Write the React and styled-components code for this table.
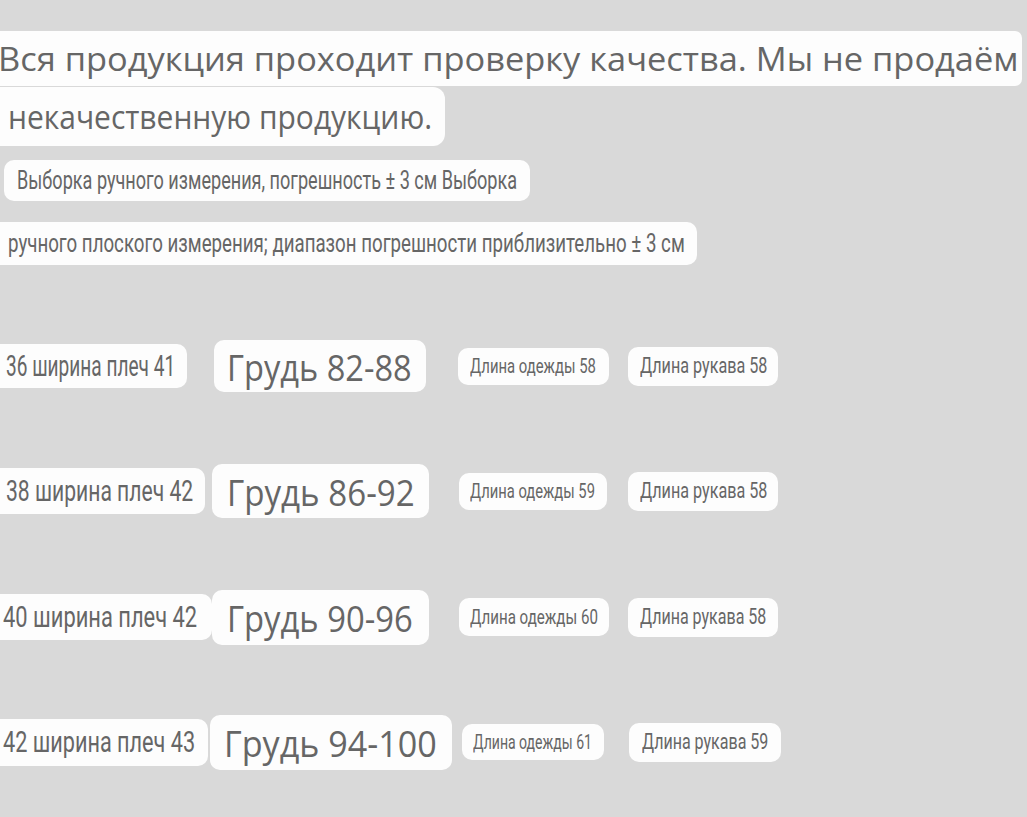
import { useLayoutEffect, useRef, useState } from 'react'
import styled, { createGlobalStyle } from 'styled-components'

const GlobalStyle = createGlobalStyle`
  html, body {
    margin: 0;
    padding: 0;
    background: #d9d9d9;
    overflow: hidden;
  }
`

const heading = "'Open Sans', 'Noto Sans', sans-serif"
const narrow = "Roboto, 'Liberation Sans', sans-serif"

const notes = [
  { text: 'Вся продукция проходит проверку качества. Мы не продаём', w: 1022, h: 55, mt: 0, ml: 0, pl: 0, tw: 1020, fs: 33, font: heading, r: '0 7px 7px 0', shift: -2 },
  { text: 'некачественную продукцию.', w: 445, h: 59, mt: 1, ml: 0, pl: 8, tw: 424, fs: 33, font: heading, r: '0 12px 12px 0' },
  { text: 'Выборка ручного измерения, погрешность ± 3 см Выборка', w: 526, h: 41, mt: 14, ml: 4, pl: 13, tw: 500, fs: 25, font: narrow, r: '10px' },
  { text: 'ручного плоского измерения; диапазон погрешности приблизительно ± 3 см', w: 697, h: 43, mt: 21, ml: 0, pl: 8, tw: 677, fs: 25, font: narrow, r: '0 10px 10px 0' },
]

const rows = [
  {
    mt: 73,
    chips: [
      { text: '36 ширина плеч 41', ml: 0, w: 187, h: 44, pl: 6, tw: 169, kind: 'a' },
      { text: 'Грудь 82-88', ml: 27, w: 212, h: 52, pl: 13, tw: 185, kind: 'b' },
      { text: 'Длина одежды 58', ml: 32, w: 151, h: 37, pl: 12, tw: 126, kind: 'c' },
      { text: 'Длина рукава 58', ml: 19, w: 150, h: 39, pl: 12, tw: 127, kind: 'd' },
    ],
  },
  {
    mt: 69,
    chips: [
      { text: '38 ширина плеч 42', ml: 0, w: 205, h: 46, pl: 6, tw: 187, kind: 'a' },
      { text: 'Грудь 86-92', ml: 7, w: 217, h: 54, pl: 15, tw: 188, kind: 'b' },
      { text: 'Длина одежды 59', ml: 30, w: 148, h: 37, pl: 11, tw: 125, kind: 'c' },
      { text: 'Длина рукава 58', ml: 21, w: 150, h: 39, pl: 12, tw: 127, kind: 'd' },
    ],
  },
  {
    mt: 70,
    chips: [
      { text: '40 ширина плеч 42', ml: 0, w: 212, h: 46, pl: 3, tw: 194, kind: 'a' },
      { text: 'Грудь 90-96', ml: 0, w: 217, h: 55, pl: 15, tw: 186, kind: 'b' },
      { text: 'Длина одежды 60', ml: 30, w: 150, h: 38, pl: 11, tw: 128, kind: 'c' },
      { text: 'Длина рукава 58', ml: 19, w: 150, h: 39, pl: 12, tw: 126, kind: 'd' },
    ],
  },
  {
    mt: 69,
    chips: [
      { text: '42 ширина плеч 43', ml: 0, w: 208, h: 47, pl: 3, tw: 192, kind: 'a' },
      { text: 'Грудь 94-100', ml: 2, w: 242, h: 55, pl: 14, tw: 213, kind: 'b' },
      { text: 'Длина одежды 61', ml: 10, w: 142, h: 36, pl: 11, tw: 119, kind: 'c' },
      { text: 'Длина рукава 59', ml: 25, w: 152, h: 39, pl: 13, tw: 126, kind: 'd' },
    ],
  },
]

const kinds = {
  a: { fs: 29, font: narrow, r: '0 10px 10px 0' },
  b: { fs: 37, font: heading, r: '10px' },
  c: { fs: 21, font: narrow, r: '10px' },
  d: { fs: 22, font: narrow, r: '10px' },
}

export default function App() {
  return (
    <>
      <GlobalStyle />
      <Page>
        {notes.map((n) => (
          <Chip key={n.text} $w={n.w} $h={n.h} $mt={n.mt} $ml={n.ml} $pl={n.pl} $r={n.r}>
            <FitText text={n.text} width={n.tw} fs={n.fs} font={n.font} shift={n.shift} />
          </Chip>
        ))}
        {rows.map((row, i) => (
          <SizeRow key={i} $mt={row.mt}>
            {row.chips.map((c) => {
              const k = kinds[c.kind]
              return (
                <Chip key={c.text + c.kind} $w={c.w} $h={c.h} $ml={c.ml} $pl={c.pl} $r={k.r}>
                  <FitText text={c.text} width={c.tw} fs={k.fs} font={k.font} />
                </Chip>
              )
            })}
          </SizeRow>
        ))}
      </Page>
    </>
  )
}

// squeeze the label so it covers the same width as in the photo
function FitText({ text, width, fs, font, shift = 0 }) {
  const ref = useRef(null)
  const [sx, setSx] = useState(1)
  useLayoutEffect(() => {
    const measure = () => {
      const el = ref.current
      if (el && el.offsetWidth) setSx(width / el.offsetWidth)
    }
    measure()
    if (document.fonts) document.fonts.ready.then(measure)
  }, [text, width])
  return (
    <Label ref={ref} $fs={fs} $font={font} style={{ transform: `translateX(${shift}px) scaleX(${sx})` }}>
      {text}
    </Label>
  )
}

const Page = styled.div`
  padding-top: 31px;
  display: flex;
  flex-direction: column;
  align-items: flex-start;
`

const SizeRow = styled.div`
  display: flex;
  align-items: center;
  height: 56px;
  margin-top: ${(p) => p.$mt}px;
`

const Chip = styled.div`
  box-sizing: border-box;
  display: flex;
  align-items: center;
  flex-shrink: 0;
  width: ${(p) => p.$w}px;
  height: ${(p) => p.$h}px;
  margin-top: ${(p) => p.$mt || 0}px;
  margin-left: ${(p) => p.$ml || 0}px;
  padding-left: ${(p) => p.$pl}px;
  background: #fdfdfd;
  border-radius: ${(p) => p.$r};
`

const Label = styled.span`
  display: inline-block;
  flex-shrink: 0;
  white-space: nowrap;
  transform-origin: left center;
  font-family: ${(p) => p.$font};
  font-size: ${(p) => p.$fs}px;
  line-height: 1;
  color: #666666;
`
